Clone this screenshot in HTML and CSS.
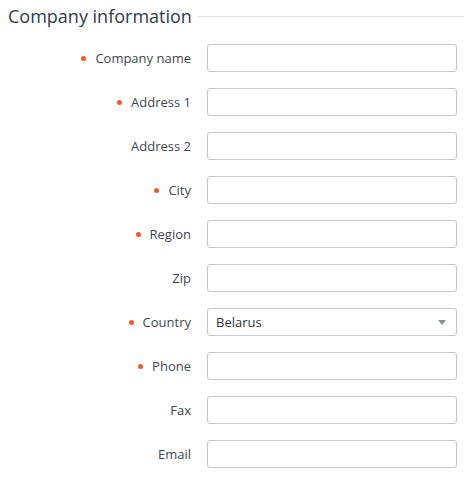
FILE: index.html
```html
<!DOCTYPE html>
<html>
<head>
<meta charset="utf-8">
<link rel="stylesheet" href="styles.css">
</head>
<body>
<section class="panel">
  <div class="legend">
    <h2 class="legend-title">Company information</h2>
    <div class="legend-line"></div>
  </div>
  <div class="form">
    <label class="label req">Company name</label><input class="field" type="text">
    <label class="label req">Address 1</label><input class="field" type="text">
    <label class="label">Address 2</label><input class="field" type="text">
    <label class="label req">City</label><input class="field" type="text">
    <label class="label req">Region</label><input class="field" type="text">
    <label class="label">Zip</label><input class="field" type="text">
    <label class="label req">Country</label>
    <div class="field select"><span>Belarus</span><span class="caret"></span></div>
    <label class="label req">Phone</label><input class="field" type="text">
    <label class="label">Fax</label><input class="field" type="text">
    <label class="label">Email</label><input class="field" type="text">
  </div>
</section>
</body>
</html>
```
FILE: styles.css
```css
html, body {
  margin: 0;
  padding: 0;
  background: #fff;
}
body {
  font-family: "Open Sans", "Noto Sans", sans-serif;
  color: #3a4450;
}
.panel {
  padding: 0 6px 0 8px;
}
.legend {
  display: flex;
  align-items: center;
  height: 32px;
  gap: 6px;
}
.legend-title {
  margin: 0;
  font-size: 18px;
  font-weight: 400;
  color: #2f3b4c;
  white-space: nowrap;
}
.legend-line {
  flex: 1;
  height: 1px;
  background: #dde1e7;
}
.form {
  margin-top: 12px;
  display: grid;
  grid-template-columns: 183px 250px;
  column-gap: 16px;
  row-gap: 16px;
  grid-auto-rows: 28px;
  align-items: center;
}
.label {
  justify-self: end;
  font-size: 13px;
  color: #3d4652;
  display: flex;
  align-items: center;
}
.label.req::before {
  content: "";
  width: 5px;
  height: 5px;
  border-radius: 50%;
  background: #f05a2c;
  margin-right: 9px;
}
.field {
  box-sizing: border-box;
  width: 250px;
  height: 28px;
  border: 1px solid #c3c7cf;
  border-radius: 3px;
  background: #fff;
  margin: 0;
  padding: 0 8px;
  font: inherit;
  font-size: 13px;
  outline: none;
}
.select {
  display: flex;
  align-items: center;
  justify-content: space-between;
  color: #2f3640;
}
.caret {
  width: 0;
  height: 0;
  border-left: 4px solid transparent;
  border-right: 4px solid transparent;
  border-top: 5px solid #8a8f96;
  margin-right: 2px;
}
```
